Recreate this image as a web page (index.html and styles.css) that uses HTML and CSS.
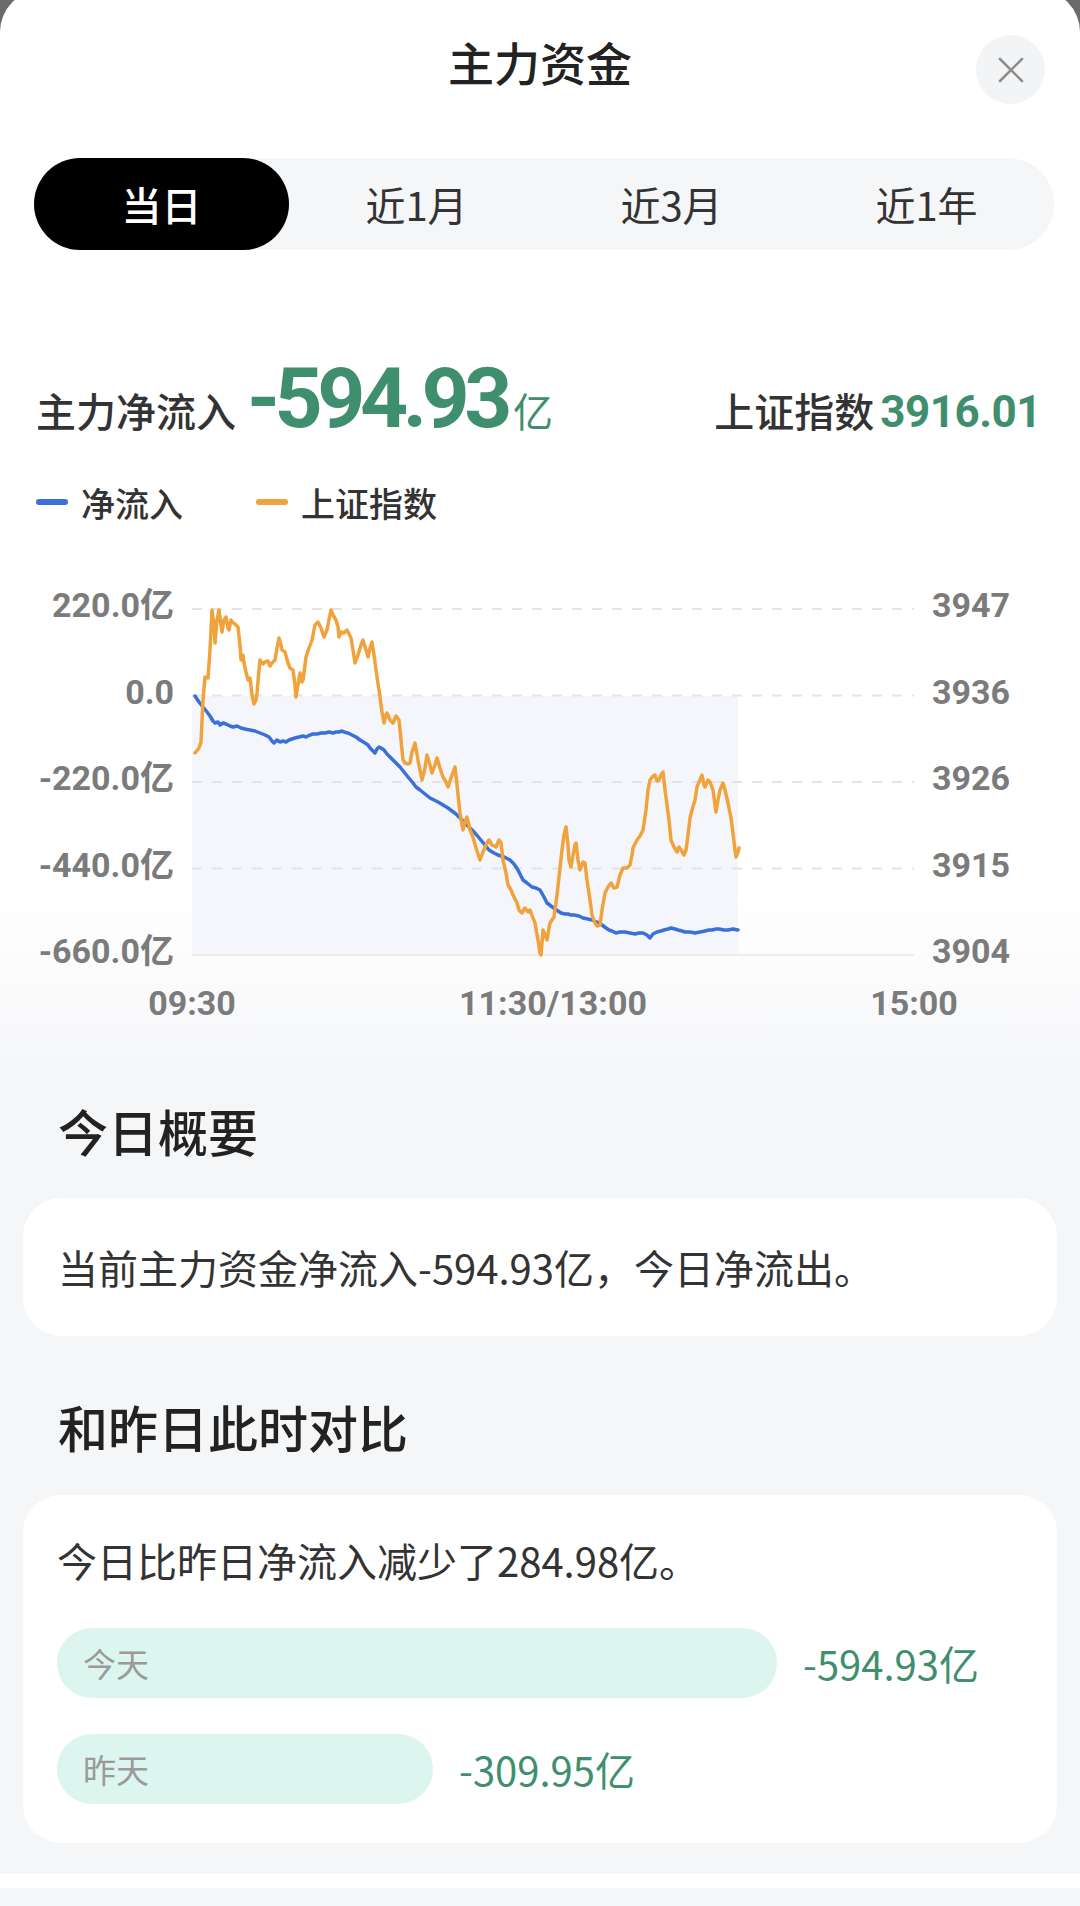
FILE: index.html
```html
<!DOCTYPE html>
<html lang="zh-CN">
<head>
<meta charset="utf-8">
<title>主力资金</title>
<link rel="stylesheet" href="styles.css">
</head>
<body>
<div class="sheet">
  <header class="top">
    <h1 class="title">主力资金</h1>
    <button class="close" aria-label="关闭">
      <svg width="26" height="26" viewBox="0 0 26 26"><path d="M2 2 L24 24 M24 2 L2 24" stroke="#8e8e8e" stroke-width="2.6" stroke-linecap="round" fill="none"/></svg>
    </button>
  </header>

  <nav class="tabs">
    <div class="tab active">当日</div>
    <div class="tab">近1月</div>
    <div class="tab">近3月</div>
    <div class="tab">近1年</div>
  </nav>

  <section class="summary">
    <div class="flow">
      <span class="flow-label">主力净流入</span>
      <span class="big">-594.93</span><span class="unit">亿</span>
    </div>
    <div class="index">
      <span class="index-label">上证指数</span>
      <span class="index-val">3916.01</span>
    </div>
  </section>

  <div class="legend">
    <div class="legend-item"><i class="dash dash-blue"></i>净流入</div>
    <div class="legend-item"><i class="dash dash-orange"></i>上证指数</div>
  </div>

  <svg class="chart" width="1080" height="460" viewBox="0 570 1080 460">
    <rect x="192" y="696" width="546" height="259" fill="#f4f6fc"/>
    <g stroke="#e4e4e4" stroke-width="2" stroke-dasharray="10 10">
      <line x1="192" y1="609" x2="914" y2="609"/>
      <line x1="192" y1="695.5" x2="914" y2="695.5"/>
      <line x1="192" y1="782" x2="914" y2="782"/>
      <line x1="192" y1="868.5" x2="914" y2="868.5"/>
    </g>
    <line x1="192" y1="955" x2="914" y2="955" stroke="#ececec" stroke-width="2"/>
    <g class="axis" text-anchor="end" dominant-baseline="central">
      <text x="174" y="605">220.0亿</text>
      <text x="174" y="692">0.0</text>
      <text x="174" y="778">-220.0亿</text>
      <text x="174" y="865">-440.0亿</text>
      <text x="174" y="951">-660.0亿</text>
    </g>
    <g class="axis" text-anchor="start" dominant-baseline="central">
      <text x="932" y="605">3947</text>
      <text x="932" y="692">3936</text>
      <text x="932" y="778">3926</text>
      <text x="932" y="865">3915</text>
      <text x="932" y="951">3904</text>
    </g>
    <g class="axis" text-anchor="middle" dominant-baseline="central">
      <text x="192" y="1003">09:30</text>
      <text x="553" y="1003">11:30/13:00</text>
      <text x="914" y="1003">15:00</text>
    </g>
    <polyline fill="none" stroke="#3b70d8" stroke-width="3.5" stroke-linejoin="round" stroke-linecap="round"
      points="195,696 199,702 203,707 207,712 210,716 213,721 215,723 218,722 220,725 223,723 226,724 230,726 233,727 237,726 241,728 245,729 250,730 255,731 260,733 265,735 269,737 272,741 274,743 277,740 280,742 283,741 286,742 289,740 292,739 295,738 299,737 303,736 306,737 310,735 313,734 317,734 321,733 325,733 329,732 333,733 336,732 339,732 342,731 344,732 348,733 352,735 356,737 360,740 365,743 368,745 370,748 372,750 375,753 377,749 379,747 381,748 384,750 387,754 390,757 393,760 396,763 400,767 404,772 408,777 413,783 416,787 420,790 425,794 430,798 434,800 438,802 443,805 448,808 452,811 456,814 460,818 465,823 470,828 475,833 480,839 485,845 489,850 494,853 498,855 504,857 510,860 514,864 518,870 521,876 523,880 527,883 532,887 536,888 540,890 544,897 547,903 551,906 555,909 558,911 561,913 565,914 568,914 571,915 574,915 579,916 583,918 588,919 592,920 597,922 602,925 606,928 609,930 612,931 616,933 620,932 625,932 630,933 635,934 639,933 643,933 647,935 650,938 653,934 657,932 661,931 664,930 668,929 671,928 675,929 678,930 682,931 685,932 690,932 695,933 700,932 705,931 709,930 712,930 716,929 719,929 724,930 728,930 733,929 738,930"/>
    <polyline fill="none" stroke="#f0a33c" stroke-width="3.5" stroke-linejoin="round" stroke-linecap="round"
      points="195,753 199,748 201,742 203,700 205,677 208,678 210,650 212,610 214,625 215,643 217,620 219,610 221,625 222,632 224,620 226,617 228,628 229,630 231,620 232,622 235,624 238,627 240,645 241,660 243,655 244,663 246,672 248,680 250,678 252,695 254,704 256,700 257,693 259,670 260,660 263,664 265,662 268,661 270,666 272,663 275,660 277,648 279,638 281,645 282,650 285,652 288,663 290,668 293,670 295,685 296,697 298,685 300,673 302,682 303,680 305,665 306,657 309,648 312,640 315,625 318,622 321,628 324,637 327,630 329,620 331,610 333,615 336,620 338,627 339,637 341,632 344,633 347,630 351,638 353,650 355,663 358,655 361,645 363,640 366,650 368,657 370,648 372,642 374,655 377,677 379,690 380,697 382,712 384,723 386,715 387,713 390,720 393,723 396,716 399,720 401,740 403,760 405,763 408,764 410,763 412,752 415,743 418,760 422,780 425,768 427,755 430,765 432,773 435,765 437,758 440,768 443,777 446,782 448,787 451,778 455,767 457,785 460,813 462,825 463,830 465,822 467,817 470,830 473,837 476,848 480,860 483,852 486,845 489,840 492,845 496,847 499,840 501,843 503,860 506,873 508,885 511,890 513,895 517,903 519,910 522,913 525,908 528,912 530,910 533,918 535,923 538,940 540,953 541,955 543,930 545,935 547,940 549,928 550,923 552,920 554,917 557,895 559,877 562,850 564,835 566,827 568,845 569,860 571,867 573,855 575,845 576,843 578,860 580,870 583,862 585,863 587,880 590,900 592,915 595,923 597,926 600,925 602,910 605,893 608,887 611,883 614,888 617,887 620,875 623,868 627,868 630,865 632,855 633,848 637,840 640,836 643,830 646,810 648,790 650,780 653,776 655,775 657,781 659,780 661,775 663,772 665,790 667,805 669,820 671,840 674,847 677,852 679,847 681,850 684,855 686,850 688,835 690,818 692,810 695,800 697,787 699,782 702,775 704,785 705,787 708,780 710,782 713,790 716,812 718,800 720,790 723,783 725,790 728,803 731,818 733,833 735,850 736,857 738,852 739,848"/>
  </svg>

  <h2 class="section-title">今日概要</h2>
  <div class="card">当前主力资金净流入-594.93亿，今日净流出。</div>

  <h2 class="section-title second">和昨日此时对比</h2>
  <div class="card compare">
    <p class="compare-text">今日比昨日净流入减少了284.98亿。</p>
    <div class="bars">
      <div class="bar-row">
        <div class="bar" style="width:720px">今天</div>
        <span class="bar-val">-594.93亿</span>
      </div>
      <div class="bar-row">
        <div class="bar" style="width:376px">昨天</div>
        <span class="bar-val">-309.95亿</span>
      </div>
    </div>
  </div>

  <div class="footer"></div>
</div>
</body>
</html>
```

FILE: styles.css
```css
html, body {
  margin: 0;
  padding: 0;
}
body {
  background: #6b6b6b;
  font-family: "Noto Sans CJK SC", sans-serif;
  overflow: hidden;
}
.sheet {
  margin-top: -10px;
  min-height: 1916px;
  border-radius: 42px 42px 0 0;
  background: linear-gradient(to bottom, #ffffff 0, #ffffff 900px, #f5f6f8 1100px, #f5f6f8 100%);
  overflow: hidden;
}

/* header */
.top {
  display: grid;
  grid-template-columns: 1fr auto 1fr;
  height: 168px;
  padding: 0 35px;
  box-sizing: border-box;
}
.title {
  grid-column: 2;
  margin: 39px 0 0;
  font-size: 46px;
  line-height: 64px;
  font-weight: 500;
  color: #222;
}
.close {
  grid-column: 3;
  justify-self: end;
  align-self: start;
  margin-top: 45px;
  width: 69px;
  height: 69px;
  padding: 0;
  border: 0;
  border-radius: 50%;
  background: #f3f4f6;
  display: flex;
  align-items: center;
  justify-content: center;
}

/* tabs */
.tabs {
  display: grid;
  grid-template-columns: repeat(4, 1fr);
  height: 92px;
  margin: 0 26px 0 34px;
  background: #f5f6f8;
  border-radius: 46px;
}
.tab {
  display: flex;
  align-items: center;
  justify-content: center;
  font-size: 40px;
  color: #333;
  border-radius: 46px;
}
.tab.active {
  background: #000;
  color: #fff;
  font-weight: 500;
}

/* summary */
.summary {
  display: flex;
  justify-content: space-between;
  align-items: baseline;
  margin: 107px 39px 0 36px;
}
.flow, .index {
  display: flex;
  align-items: baseline;
}
.flow-label, .index-label {
  font-size: 40px;
  line-height: 1;
  font-weight: 500;
  color: #333;
}
.big {
  margin-left: 11px;
  font-family: Roboto, sans-serif;
  font-weight: 700;
  font-size: 84px;
  line-height: 1;
  letter-spacing: -5.5px;
  color: #3f8f6f;
}
.unit {
  margin-left: 6px;
  font-size: 40px;
  line-height: 1;
  color: #3f8f6f;
}
.index-val {
  margin-left: 6px;
  font-family: Roboto, sans-serif;
  font-weight: 700;
  font-size: 44px;
  line-height: 1;
  letter-spacing: -0.5px;
  color: #3f8f6f;
}

/* legend */
.legend {
  display: flex;
  align-items: center;
  gap: 73px;
  height: 50px;
  margin: 36px 0 0 36px;
  font-size: 34px;
  font-weight: 500;
  color: #333;
}
.legend-item {
  display: flex;
  align-items: center;
  gap: 13px;
}
.dash {
  display: block;
  width: 32px;
  height: 6px;
  border-radius: 3px;
}
.dash-blue { background: #3b70d8; }
.dash-orange { background: #f0a33c; }

/* chart */
.chart {
  display: block;
  margin-top: 43px;
}
.axis {
  font-family: Roboto, "Noto Sans CJK SC", sans-serif;
  font-weight: 700;
  font-size: 34px;
  fill: #7b7b7b;
}

/* sections */
.section-title {
  margin: 65px 0 0 58px;
  font-size: 50px;
  line-height: 70px;
  font-weight: 500;
  color: #222;
}
.section-title.second {
  margin-top: 55px;
}
.card {
  margin: 33px 23px 0;
  padding: 40px 35px;
  background: #fff;
  border-radius: 38px;
  font-size: 40px;
  line-height: 58px;
  color: #333;
}
.compare {
  margin-top: 34px;
  padding: 36px 34px 39px;
}
.compare-text {
  margin: 0;
}
.bars {
  display: flex;
  flex-direction: column;
  gap: 36px;
  margin-top: 39px;
}
.bar-row {
  display: flex;
  align-items: center;
  gap: 26px;
}
.bar {
  height: 70px;
  box-sizing: border-box;
  padding-left: 26px;
  border-radius: 35px;
  background: #dcf5ef;
  display: flex;
  align-items: center;
  font-size: 33px;
  color: #9a9a9a;
}
.bar-val {
  font-size: 40px;
  color: #3f8f6f;
}

.footer {
  margin-top: 31px;
  height: 14px;
  background: #fff;
}
```
